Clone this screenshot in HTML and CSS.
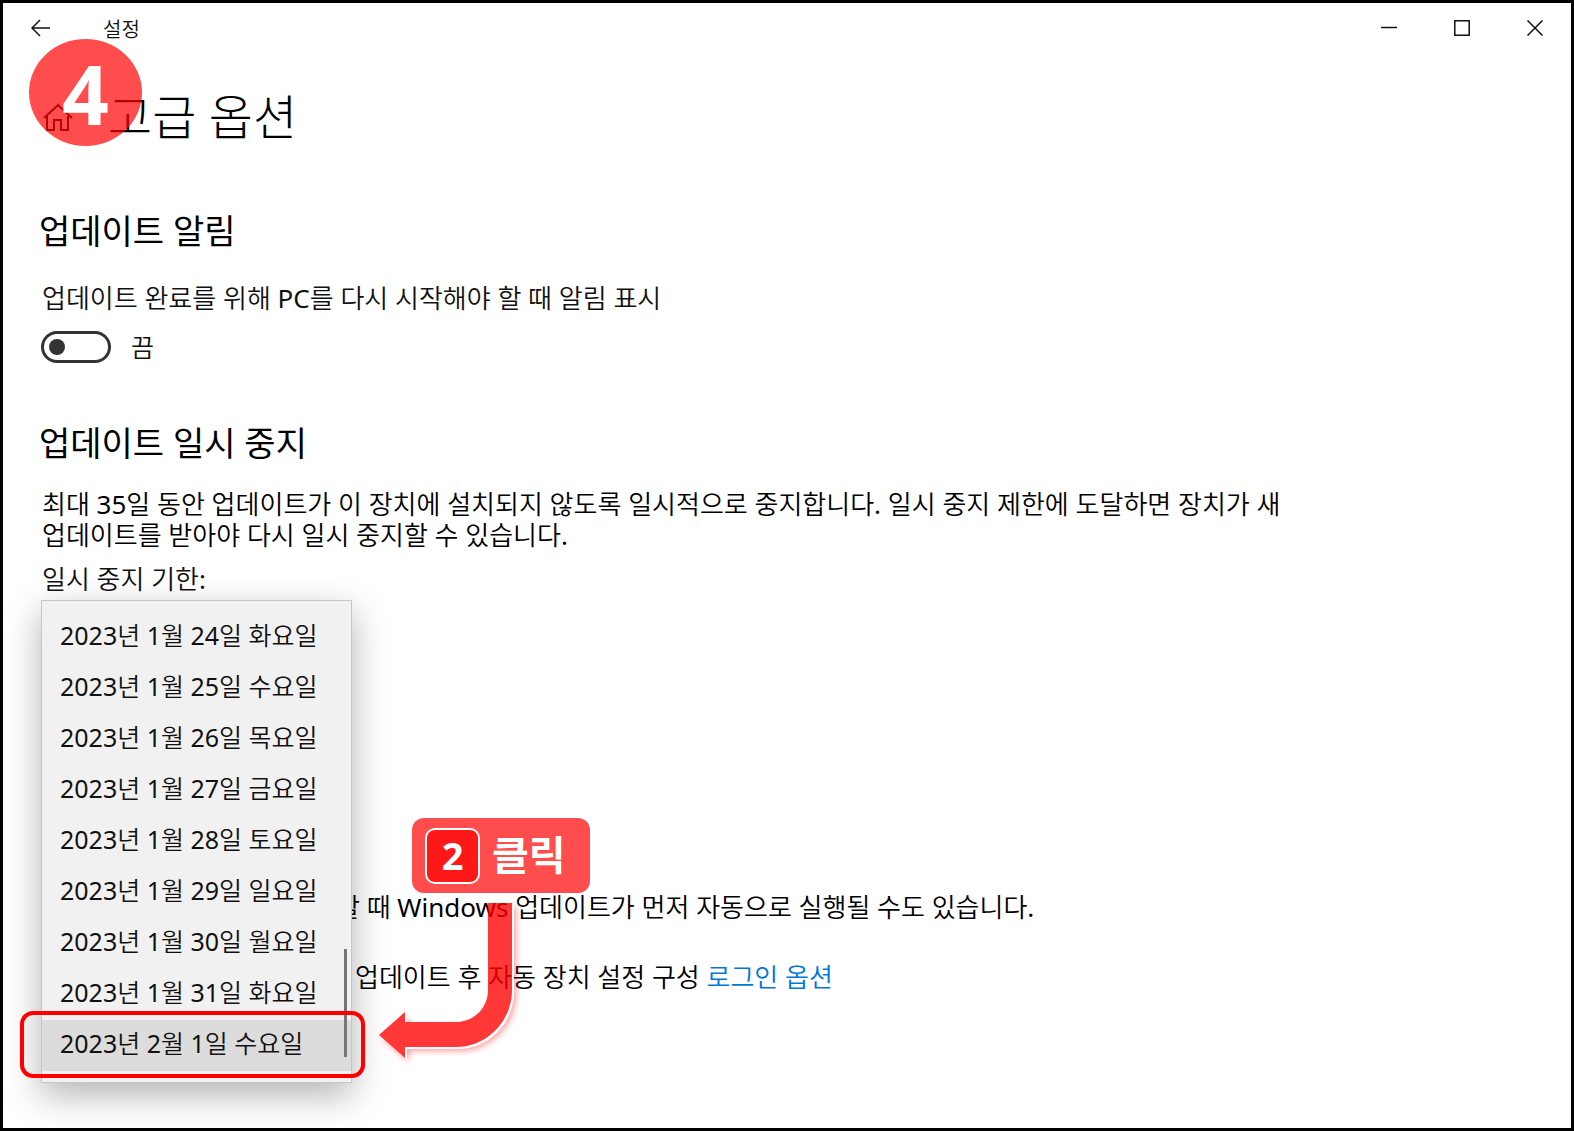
FILE: index.html
```
<!DOCTYPE html>
<html lang="ko">
<head>
<meta charset="utf-8">
<meta name="viewport" content="width=device-width, initial-scale=1">
<title>설정</title>
<link rel="stylesheet" href="styles.css">
</head>
<body>
<div class="window">
  <header class="titlebar">
    <button class="icon-button" type="button" aria-label="뒤로">
      <svg width="20" height="18" viewBox="0 0 20 18"><path d="M9 1 1 9l8 8M1 9h18"/></svg>
    </button>
    <span class="app-name">설정</span>
    <div class="window-controls">
      <button class="icon-button" type="button" aria-label="최소화">
        <svg width="16" height="16" viewBox="0 0 16 16"><path d="M0 7.500h16"/></svg>
      </button>
      <button class="icon-button" type="button" aria-label="최대화">
        <svg width="16" height="16" viewBox="0 0 16 16"><path d="M.8.8h14.400v14.400H.8z"/></svg>
      </button>
      <button class="icon-button" type="button" aria-label="닫기">
        <svg width="16" height="16" viewBox="0 0 16 16"><path d="m.5.5 15 15m0-15-15 15"/></svg>
      </button>
    </div>
  </header>

  <main class="content">
    <div class="page-head">
      <svg class="home" width="30" height="28" viewBox="0 0 30 28"><path d="M1 15 15 2l14 13M4 13v14h7V17h7v10h7V13"/></svg>
      <h1>고급 옵션</h1>
    </div>

    <section class="section">
      <h2>업데이트 알림</h2>
      <label class="text" for="notify">업데이트 완료를 위해 PC를 다시 시작해야 할 때 알림 표시</label>
      <div class="toggle-row">
        <input class="toggle" type="checkbox" role="switch" id="notify">
        <span class="toggle-state">끔</span>
      </div>
    </section>

    <section class="section">
      <h2>업데이트 일시 중지</h2>
      <p class="text">최대 35일 동안 업데이트가 이 장치에 설치되지 않도록 일시적으로 중지합니다. 일시 중지 제한에 도달하면 장치가 새 업데이트를 받아야 다시 일시 중지할 수 있습니다.</p>
      <label class="text until-label" for="until">일시 중지 기한:</label>
      <div class="picker">
        <div class="popup">
          <select class="dates" id="until" size="9">
            <option>2023년 1월 24일 화요일</option>
            <option>2023년 1월 25일 수요일</option>
            <option>2023년 1월 26일 목요일</option>
            <option>2023년 1월 27일 금요일</option>
            <option>2023년 1월 28일 토요일</option>
            <option>2023년 1월 29일 일요일</option>
            <option>2023년 1월 30일 월요일</option>
            <option>2023년 1월 31일 화요일</option>
            <option selected>2023년 2월 1일 수요일</option>
          </select>
          <span class="thumb"></span>
          <span class="highlight"></span>
        </div>
      </div>
    </section>

    <p class="text restart-note">할 때 Windows 업데이트가 먼저 자동으로 실행될 수도 있습니다.</p>
    <p class="text signin-note">업데이트 후 자동 장치 설정 구성 <a href="#signin">로그인 옵션</a></p>
  </main>

  <div class="step">4</div>
  <div class="callout"><span class="key">2</span><span class="action">클릭</span></div>
  <svg class="arrow" width="160" height="190" viewBox="0 0 160 190">
    <filter id="edge" x="-10%" y="-10%" width="120%" height="120%" color-interpolation-filters="sRGB">
      <feOffset in="SourceAlpha" dx="4" dy="4"/>
      <feGaussianBlur stdDeviation="3" result="soft"/>
      <feFlood flood-color="#f00" flood-opacity=".5"/>
      <feComposite in2="soft" operator="in"/>
      <feComposite in2="SourceAlpha" operator="out" result="glow"/>
      <feOffset in="SourceAlpha" dx="2" dy="2" result="rim-shape"/>
      <feFlood flood-color="#fff"/>
      <feComposite in2="rim-shape" operator="in"/>
      <feComposite in2="SourceAlpha" operator="out" result="rim"/>
      <feMerge>
        <feMergeNode in="glow"/>
        <feMergeNode in="rim"/>
        <feMergeNode in="SourceGraphic"/>
      </feMerge>
    </filter>
    <path filter="url(#edge)" d="M118 13h24v87c0 31-25 57-56 57H35v11L9 145l26-23v10h51c18 0 32-14 32-32z"/>
  </svg>
</div>
</body>
</html>
```
FILE: styles.css
```
* { box-sizing: border-box; }

body {
  margin: 0;
  background: #fff;
  color: #111;
  font-family: "Noto Sans", "Noto Sans CJK KR", sans-serif;
  font-size: 26px;
}

h1, h2, p { margin: 0; color: #000; }

.window {
  position: relative;
  min-height: 100vh;
  border: 3px solid #000;
  overflow: hidden;
}

.titlebar {
  display: flex;
  align-items: center;
  height: 50px;
  padding: 0 28px;
}

.icon-button {
  display: flex;
  padding: 0;
  border: 0;
  background: none;
}

.icon-button svg, .home {
  fill: none;
  stroke: #111;
  stroke-width: 1.5;
}

.app-name {
  margin-left: 52px;
  font-size: 20px;
  font-weight: 350;
}

.window-controls {
  display: flex;
  gap: 57px;
  margin-left: auto;
}

.content { padding: 32px 38px 0; }

.page-head {
  display: flex;
  align-items: center;
  gap: 35px;
  height: 64px;
  padding-left: 2px;
}

.home { stroke-width: 2; }

h1 { font-size: 48px; line-height: 64px; font-weight: 300; }

h2 { margin-left: -2px; font-size: 34px; line-height: 48px; font-weight: 400; }

.text, .toggle-state, .dates option {
  font-family: "Noto Sans", "Noto Sans CJK KR DemiLight", "Noto Sans CJK KR", sans-serif;
  font-weight: 400;
}

.text {
  display: block;
  padding-left: 1px;
  line-height: 31px;
  word-break: keep-all;
}

.section:nth-of-type(1) { margin-top: 58px; }
.section:nth-of-type(2) { margin-top: 56px; }
.section h2 + .text { margin-top: 28px; }
.section h2 + p.text { max-width: 1300px; margin-top: 22px; }

.toggle-row {
  display: flex;
  align-items: center;
  gap: 20px;
  margin-top: 17px;
  height: 32px;
}

.toggle {
  appearance: none;
  display: flex;
  align-items: center;
  width: 70px;
  height: 32px;
  margin: 0;
  padding-left: 5px;
  border: 3px solid #333;
  border-radius: 16px;
}

.toggle::before {
  content: "";
  width: 16px;
  height: 16px;
  border-radius: 50%;
  background: #333;
}

.toggle-state { padding-bottom: 2px; font-size: 25px; }

.until-label { margin-top: 13px; }

.picker {
  position: relative;
  height: 297px;
}

.popup {
  position: absolute;
  top: 5px;
  left: 0;
  width: 311px;
  border: 1px solid #c6c6c6;
  background: #f1f1f1;
  box-shadow: 0 12px 34px rgba(0, 0, 0, .3);
}

.dates {
  appearance: none;
  display: block;
  width: 100%;
  height: 481px;
  padding: 11px 0;
  border: 0;
  outline: 0;
  border-radius: 0;
  background: none;
  color: #111;
  font: inherit;
  font-size: 25px;
  overflow: hidden;
  scrollbar-width: none;
}

.dates option {
  height: 51px;
  padding: 4px 18px 0;
  line-height: 47px;
  color: #111;
}

.dates option:checked {
  background: #dcdcdc linear-gradient(#dcdcdc, #dcdcdc);
  color: #111;
}

.thumb {
  position: absolute;
  right: 4px;
  bottom: 25px;
  width: 3px;
  height: 108px;
  background: #777;
}

.highlight {
  position: absolute;
  left: -22px;
  right: -14px;
  bottom: 4px;
  height: 67px;
  border: 4px solid #f00;
  border-radius: 13px;
}

.restart-note { padding-left: 295px; }

.signin-note {
  margin-top: 39px;
  padding-left: 314px;
}

a { color: #0078d7; text-decoration: none; }

.step {
  position: absolute;
  top: 36px;
  left: 26px;
  width: 113px;
  height: 107px;
  border-radius: 50%;
  background: rgba(255, 0, 0, .7);
  color: #fff;
  font-size: 82px;
  font-weight: 700;
  line-height: 109px;
  text-align: center;
}

.callout {
  position: absolute;
  top: 815px;
  left: 409px;
  display: flex;
  align-items: center;
  gap: 12px;
  width: 178px;
  height: 75px;
  padding-left: 13px;
  border-radius: 12px;
  background: #ff4d4d;
  color: #fff;
  font-size: 40px;
  font-weight: 700;
}

.action { padding-bottom: 6px; }

.key {
  width: 55px;
  height: 56px;
  border: 2px solid #fff;
  border-radius: 10px;
  background: #ff1818;
  font-size: 38px;
  line-height: 50px;
  text-align: center;
}

.arrow {
  position: absolute;
  top: 887px;
  left: 367px;
  fill: #f00;
  opacity: .78;
}
```
